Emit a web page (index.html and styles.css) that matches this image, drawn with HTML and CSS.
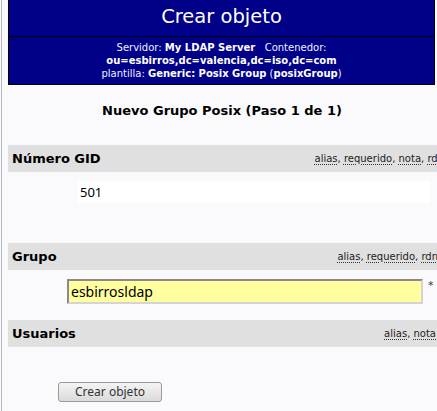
FILE: index.html
```html
<!DOCTYPE html>
<html lang="es">
<head>
<meta charset="utf-8">
<title>Crear objeto</title>
<link rel="stylesheet" href="styles.css">
</head>
<body>
<div class="frame">
  <div class="page">
    <div class="head">
      <div class="title">Crear objeto</div>
      <div class="info">
        Servidor: <b>My LDAP Server</b>&nbsp;&nbsp; Contenedor:<br>
        <b>ou=esbirros,dc=valencia,dc=iso,dc=com</b><br>
        plantilla: <b>Generic: Posix Group</b> (<b>posixGroup</b>)
      </div>
    </div>

    <div class="step">Nuevo Grupo Posix (Paso 1 de 1)</div>

    <div class="attr-head attr-head-1">
      <span class="label">Número GID</span>
      <span class="notes"><abbr>alias</abbr>, <abbr>requerido</abbr>, <abbr>nota</abbr>, <abbr>rdn</abbr></span>
    </div>
    <div class="attr-value">
      <div class="value-box">501</div>
    </div>

    <div class="attr-head attr-head-2">
      <span class="label">Grupo</span>
      <span class="notes"><abbr>alias</abbr>, <abbr>requerido</abbr>, <abbr>rdn</abbr></span>
    </div>
    <div class="attr-input">
      <input class="field" type="text" value="esbirrosldap">
      <span class="req">*</span>
    </div>

    <div class="attr-head attr-head-3">
      <span class="label">Usuarios</span>
      <span class="notes"><abbr>alias</abbr>, <abbr>nota</abbr></span>
    </div>

    <div class="actions">
      <button class="btn" type="button">Crear objeto</button>
    </div>
  </div>
</div>
</body>
</html>
```
FILE: styles.css
```css
html, body {
  margin: 0;
  padding: 0;
  background: #fafafd;
  overflow: hidden;
}

body {
  font-family: "DejaVu Sans", Verdana, sans-serif;
  font-size: 13px;
  color: #000;
}

.frame {
  margin-left: 1px;
  border-left: 1px solid #b9b9c8;
  min-height: 411px;
  padding-left: 6px;
}

.page {
  width: 430px;
}

.head {
  background: #000088;
  color: #fff;
  border-left: 1px solid #000;
  border-right: 1px solid #000;
  border-bottom: 1px solid #000;
  width: 425px;
}

.title {
  height: 36px;
  line-height: 34px;
  font-size: 19.5px;
  text-align: center;
  border-bottom: 1px solid #000;
}

.info {
  padding: 4px 0;
  font-size: 10px;
  line-height: 13px;
  text-align: center;
  color: #f0f0ff;
}

.info b {
  color: #fff;
}

.step {
  padding: 18px 0 0;
  height: 42px;
  line-height: 16px;
  font-weight: bold;
  font-size: 13px;
  text-align: center;
  width: 428px;
}

.attr-head {
  background: #e0e0e0;
  height: 27px;
  display: flex;
  align-items: center;
  justify-content: space-between;
  padding-left: 4px;
  width: 428px;
  white-space: nowrap;
}

.label {
  font-weight: bold;
  font-size: 13px;
}

.notes {
  font-size: 10px;
  color: #222;
}

.attr-head-1 .notes {
  margin-right: -4px;
}

.attr-head-2 .notes {
  margin-right: 2px;
}

.attr-head-3 .notes {
  margin-right: 4px;
}

abbr {
  text-decoration: underline dotted #333;
  text-underline-offset: 2px;
}

.attr-value {
  padding: 9px 0 40px 70px;
}

.value-box {
  background: #fff;
  width: 350px;
  height: 22px;
  line-height: 22px;
  padding-left: 2px;
  font-family: "Noto Sans", sans-serif;
  font-size: 13px;
}

.attr-input {
  display: flex;
  align-items: flex-start;
  padding: 9px 0 16px 59px;
}

.field {
  box-sizing: border-box;
  width: 356px;
  height: 25px;
  margin: 0;
  padding: 0 2px;
  background: #ffffa0;
  border: 2px solid;
  border-color: #8a8a8a #d4d4d4 #d4d4d4 #8a8a8a;
  font-family: "Noto Sans", sans-serif;
  font-size: 14px;
  color: #000;
}

.req {
  margin-left: 5px;
  font-size: 11px;
  color: #333;
  line-height: 14px;
}

.actions {
  padding: 35px 0 0 50px;
}

.btn {
  width: 104px;
  height: 20px;
  padding: 0;
  border: 1px solid #9a9a9a;
  border-radius: 3px;
  background: linear-gradient(#f4f4f4, #dadada);
  font-family: "Noto Sans", sans-serif;
  font-size: 12px;
  color: #333;
  line-height: 18px;
}
```
